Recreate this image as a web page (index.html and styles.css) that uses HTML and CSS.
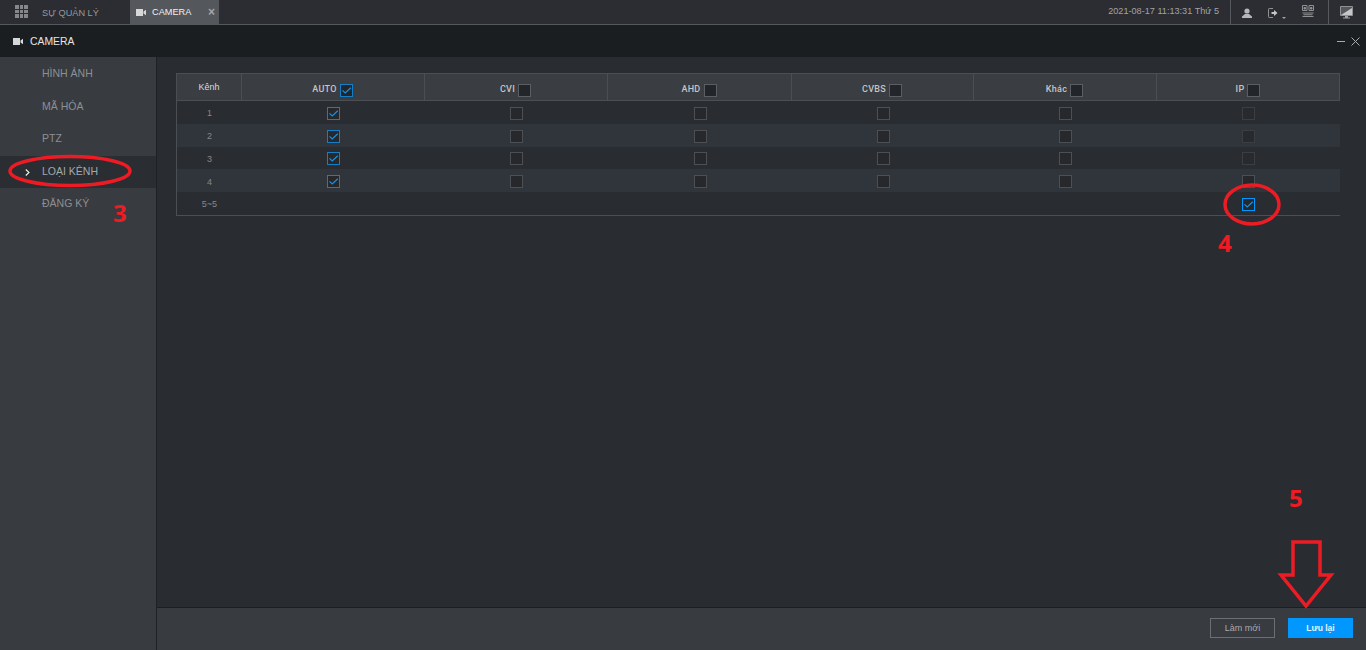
FILE: index.html
```
<!DOCTYPE html>
<html lang="vi">
<head>
<meta charset="utf-8">
<title>CAMERA</title>
<link rel="stylesheet" href="styles.css">
</head>
<body>
<svg class="defs" width="0" height="0"><defs>
<symbol id="cam" viewBox="0 0 10 7"><path d="M0 0h7v7H0zM7.500 2.600 10 .8v5.400L7.500 4.400z" fill="currentColor"/></symbol>
<symbol id="tick" viewBox="0 0 13 13"><path d="M2.500 6.400 5.200 9 10.800 3.800" fill="none" stroke="#1593e6" stroke-width="1.200"/></symbol>
</defs></svg>
<div class="app">
  <header class="topbar">
    <div class="grid-icon"><i></i><i></i><i></i><i></i><i></i><i></i><i></i><i></i><i></i></div>
    <div class="top-link">SỰ QUẢN LÝ</div>
    <div class="tab">
      <svg class="cam"><use href="#cam"/></svg>
      <span class="tab-label">CAMERA</span>
      <span class="tab-close">×</span>
    </div>
    <div class="top-right">
      <span class="clock">2021-08-17 11:13:31 Thứ 5</span>
      <div class="icons">
        <svg class="ic-person" width="10" height="10" viewBox="0 0 10 10"><circle cx="5" cy="3" r="2.600" fill="#b4b6b8"/><path d="M3 6h4l3 2.500V10H0V8.500z" fill="#b4b6b8"/></svg>
        <span class="logout">
          <svg width="10" height="10" viewBox="0 0 10 10"><path d="M5 .5H1.200Q.5.5.5 1.200v7.600q0 .7.7.7H5" fill="none" stroke="#8f9193"/><path d="M3.500 4h2.500V2l3.500 3-3.500 3V6H3.500z" fill="#c4c6c8"/></svg>
          <i class="caret"></i>
        </span>
        <svg class="ic-qr" width="12" height="12" viewBox="0 0 12 12"><path d="M.5.500h4.500v5H.5zM7 .5h4.500v5H7zM.5 8h11M.5 11.500h11" fill="none" stroke="#8f9193"/><path d="M2 2.500h1.500V4H2zM8.500 2.500H10V4H8.500zM1.500 9.750h9" stroke="#8f9193" fill="#8f9193"/></svg>
      </div>
      <div class="monitor">
        <svg width="13" height="13" viewBox="0 0 13 13"><path d="M.5.500h12v9H.5z" fill="#55585c" stroke="#8f9193"/><path d="M1 9 12 2v7z" fill="#c4c6c8"/><path d="M5 10h3v1.500h2v1H3v-1h2z" fill="#a0a2a4"/></svg>
      </div>
    </div>
  </header>

  <div class="titlebar">
    <svg class="cam"><use href="#cam"/></svg>
    <span class="title">CAMERA</span>
    <div class="win-btns">
      <svg width="8" height="8" viewBox="0 0 8 8"><path d="M0 4.500h8" stroke="#a8aaac"/></svg>
      <svg width="9" height="9" viewBox="0 0 9 9"><path d="M.5.500l8 8M8.500.500l-8 8" stroke="#a8aaac"/></svg>
    </div>
  </div>

  <div class="body">
    <nav class="side">
      <div class="side-item">HÌNH ẢNH</div>
      <div class="side-item">MÃ HÓA</div>
      <div class="side-item">PTZ</div>
      <div class="side-item active"><svg class="chev" width="5" height="7" viewBox="0 0 5 7"><path d="M.8.500 4 3.500.8 6.500" fill="none" stroke="#f2f2f2" stroke-width="1.100"/></svg>LOẠI KÊNH</div>
      <div class="side-item">ĐĂNG KÝ</div>
    </nav>
    <main class="main">
      <div class="content">
        <div class="table">
          <div class="row head">
            <div class="cell first">Kênh</div>
            <div class="cell"><span class="hl">AUTO</span><span class="cb hb on"><svg><use href="#tick"/></svg></span></div>
            <div class="cell"><span class="hl">CVI</span><span class="cb hb"></span></div>
            <div class="cell"><span class="hl">AHD</span><span class="cb hb"></span></div>
            <div class="cell"><span class="hl">CVBS</span><span class="cb hb"></span></div>
            <div class="cell"><span class="hl">Khác</span><span class="cb hb"></span></div>
            <div class="cell"><span class="hl">IP</span><span class="cb hb"></span></div>
          </div>
          <div class="row">
            <div class="cell first">1</div>
            <div class="cell"><span class="cb on"><svg><use href="#tick"/></svg></span></div>
            <div class="cell"><span class="cb"></span></div><div class="cell"><span class="cb"></span></div><div class="cell"><span class="cb"></span></div><div class="cell"><span class="cb"></span></div><div class="cell"><span class="cb dis"></span></div>
          </div>
          <div class="row alt">
            <div class="cell first">2</div>
            <div class="cell"><span class="cb on"><svg><use href="#tick"/></svg></span></div>
            <div class="cell"><span class="cb"></span></div><div class="cell"><span class="cb"></span></div><div class="cell"><span class="cb"></span></div><div class="cell"><span class="cb"></span></div><div class="cell"><span class="cb dis"></span></div>
          </div>
          <div class="row">
            <div class="cell first">3</div>
            <div class="cell"><span class="cb on"><svg><use href="#tick"/></svg></span></div>
            <div class="cell"><span class="cb"></span></div><div class="cell"><span class="cb"></span></div><div class="cell"><span class="cb"></span></div><div class="cell"><span class="cb"></span></div><div class="cell"><span class="cb dis"></span></div>
          </div>
          <div class="row alt">
            <div class="cell first">4</div>
            <div class="cell"><span class="cb on"><svg><use href="#tick"/></svg></span></div>
            <div class="cell"><span class="cb"></span></div><div class="cell"><span class="cb"></span></div><div class="cell"><span class="cb"></span></div><div class="cell"><span class="cb"></span></div><div class="cell"><span class="cb"></span></div>
          </div>
          <div class="row">
            <div class="cell first">5~5</div>
            <div class="cell"></div><div class="cell"></div><div class="cell"></div><div class="cell"></div><div class="cell"></div>
            <div class="cell"><span class="cb on bright"><svg><use href="#tick"/></svg></span></div>
          </div>
        </div>
      </div>
      <footer class="footer">
        <button class="btn ghost">Làm mới</button>
        <button class="btn primary">Lưu lại</button>
      </footer>
    </main>
  </div>

  <svg class="marks" width="1366" height="650" viewBox="0 0 1366 650">
    <ellipse cx="70" cy="171" rx="60" ry="14.500" fill="none" stroke="#ed1c24" stroke-width="3.500"/>
    <ellipse cx="1252" cy="204.500" rx="27" ry="19.500" fill="none" stroke="#ed1c24" stroke-width="3.500"/>
    <path d="M1293 542h27v33h11l-25 31-25-31h12z" fill="none" stroke="#ed1c24" stroke-width="3.500"/>
  </svg>
  <span class="num n3">3</span>
  <span class="num n4">4</span>
  <span class="num n5">5</span>
</div>
</body>
</html>
```
FILE: styles.css
```
* { box-sizing: border-box; }
html, body { margin: 0; padding: 0; height: 650px; overflow: hidden; }
body { font-family: "Liberation Sans", Arial, sans-serif; background: #292c30; color: #a6a8aa; }
.defs { position: absolute; }
.app { position: relative; width: 1366px; height: 650px; display: flex; flex-direction: column; }

.topbar { height: 25px; flex: none; display: flex; align-items: stretch; background: #2b2d32; border-bottom: 1px solid #55585c; }
.grid-icon { width: 13px; height: 13px; margin: 5px 0 0 15px; display: grid; grid-template-columns: repeat(3, 3.670px); grid-auto-rows: 3.670px; gap: 1px; }
.grid-icon i { background: #85878a; }
.top-link { width: 102px; padding: 7px 0 0 14px; font-size: 9.200px; color: #97999c; line-height: 12px; }
.tab { width: 89px; display: flex; align-items: center; background: #54575c; padding-left: 6px; position: relative; height: 24px; }
.cam { width: 10px; height: 7px; color: #d6d7d8; flex: none; }
.tab-label { font-size: 9.200px; color: #f0f0f0; margin-left: 6px; }
.tab-close { position: absolute; left: 78px; top: 5px; font-size: 12px; line-height: 14px; color: #a4a6a8; font-weight: bold; }
.top-right { margin-left: auto; display: flex; align-items: stretch; }
.clock { font-size: 9.150px; line-height: 23px; color: #a2a4a6; padding-right: 11px; }
.icons { width: 99px; border-left: 1px solid #55585c; border-right: 1px solid #55585c; display: flex; align-items: center; gap: 16px; padding: 0 0 0 11px; }
.ic-person { margin-top: 1px; }
.ic-qr { margin-top: -3px; }
.logout { display: flex; align-items: flex-end; gap: 4px; margin-top: 1px; }
.caret { width: 0; height: 0; border: 2px solid transparent; border-top-color: #a0a2a4; margin-bottom: -3px; }
.monitor { width: 37px; padding: 5px 0 0 11px; }

.titlebar { height: 32px; flex: none; display: flex; align-items: center; background: #1b1e21; padding-left: 13px; }
.title { font-size: 10.400px; color: #e6e6e6; margin-left: 7px; }
.win-btns { margin-left: auto; padding-right: 6px; display: flex; gap: 6px; align-items: center; }

.body { flex: 1; display: flex; min-height: 0; }
.side { width: 157px; flex: none; background: #383b40; border-right: 1px solid #1f2124; padding-top: 1px; }
.side-item { height: 32.500px; line-height: 31px; padding-left: 42px; font-size: 10.500px; color: #8d9094; position: relative; }
.side-item.active { background: #2a2d32; color: #a6a8aa; }
.chev { position: absolute; left: 25px; top: 13px; }

.main { flex: 1; display: flex; flex-direction: column; min-width: 0; }
.content { flex: 1; padding: 16px 26px 0 19px; }
.footer { height: 43px; flex: none; display: flex; justify-content: flex-end; gap: 13px; background: #383b40; border-top: 1px solid #1c1e21; padding: 10px 13px 0 0; }
.btn { width: 65px; height: 20px; font-family: inherit; font-size: 9px; padding: 0; }
.ghost { background: transparent; border: 1px solid #6c6e71; color: #a8aaac; }
.primary { background: #0098ff; border: 0; color: #e6f4ff; font-weight: bold; font-size: 8.500px; }

.table { border: 1px solid #4b4e53; border-right: 0; }
.row { display: grid; grid-template-columns: 65px 183px 183px 184px 182px 183px 183px; height: 22.750px; }
.row.alt { background: #30343b; }
.row .cell { display: flex; align-items: center; justify-content: center; font-size: 9px; color: #85888c; padding-top: 1.800px; }
.row.head { height: 27px; background: #3a3d42; border-bottom: 1px solid #4b4e53; border-right: 1px solid #4b4e53; }
.row.head .cell { border-right: 1px solid #4b4e53; align-items: flex-end; padding: 0 1px 4px 0; line-height: 13px; }
.row.head .cell:last-child { border-right: 0; }
.row.head .first { align-items: flex-start; padding: 7px 0 0; color: #dcdcdc; }
.hl { margin-right: 3px; font-family: Roboto, sans-serif; font-weight: 500; font-size: 9px; letter-spacing: .3px; color: #c4c5c6; }
.cb { width: 13px; height: 13px; border: 1px solid #4c4f53; background: #26282c; display: block; position: relative; flex: none; }
.cb svg { position: absolute; left: -1px; top: -1px; width: 13px; height: 13px; }
.cb.on { border-color: #147ec6; }
.cb.bright { border-color: #0098ff; }
.cb.dis { border-color: #3b3e42; background: #282a2e; }
.cb.hb { border-color: #5b5e62; background: #222529; margin-bottom: -1px; }
.cb.hb.on { border-color: #147ec6; }

.marks { position: absolute; left: 0; top: 0; pointer-events: none; }
.num { position: absolute; font-family: "Open Sans", sans-serif; font-weight: 700; font-size: 24px; line-height: 28px; color: #ed1c24; }
.n3 { left: 113px; top: 199px; }
.n4 { left: 1218px; top: 229px; }
.n5 { left: 1289px; top: 484px; }
```
